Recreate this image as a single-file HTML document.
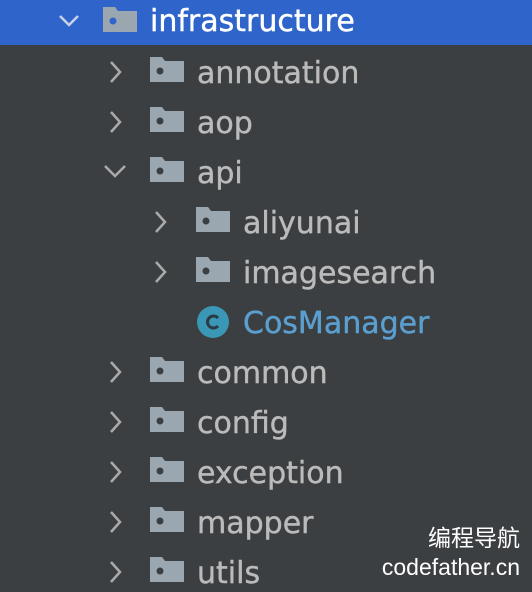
<html><head><style>
body{margin:0;width:532px;height:592px;background:#3c3f41;overflow:hidden;position:relative;font-family:"DejaVu Sans",sans-serif}
.r{position:absolute;left:0;width:532px;height:50px}
.t{position:absolute;top:6px;font-size:30px;color:#bbbbbb;line-height:34px;-webkit-text-stroke:0.4px currentColor}
svg{position:absolute}
.wm{position:absolute;right:12px;color:#fff;font-family:"Liberation Sans","Noto Sans CJK SC",sans-serif;font-size:23px;text-align:right;line-height:32px}
</style></head><body>
<div class="r" style="top:0;height:45px;background:#2f65ca"></div>
<svg width="0" height="0"><defs>
<g id="f"><path d="M0 2 h12 l3 4 h19 v21 h-34z" fill="#9aa7b0"/><circle cx="10" cy="16" r="3.5" fill="#3c3f41"/></g>
<g id="fs"><path d="M0 2 h12 l3 4 h19 v21 h-34z" fill="#9aa7b0"/><circle cx="10" cy="16" r="3.5" fill="#2f65ca"/></g>
</defs></svg>
<svg style="left:58px;top:10px" width="22" height="22"><path d="M2 6 L11 15 L20 6" stroke="#c8d2e8" stroke-width="2.5" fill="none"/></svg>
<svg style="left:103px;top:5px" width="36" height="30"><use href="#fs"/></svg>
<div class="t" style="left:150px;top:5px;color:#fff">infrastructure</div>

<svg style="left:105px;top:60px" width="22" height="24"><path d="M6 2 L15 12 L6 22" stroke="#aaa" stroke-width="2.5" fill="none"/></svg>
<svg style="left:150px;top:55px" width="36" height="30"><use href="#f"/></svg>
<div class="t" style="left:197px;top:57px">annotation</div>

<svg style="left:105px;top:110px" width="22" height="24"><path d="M6 2 L15 12 L6 22" stroke="#aaa" stroke-width="2.5" fill="none"/></svg>
<svg style="left:150px;top:105px" width="36" height="30"><use href="#f"/></svg>
<div class="t" style="left:197px;top:107px">aop</div>

<svg style="left:103px;top:160px" width="24" height="22"><path d="M2 6 L12 16 L22 6" stroke="#aaa" stroke-width="2.5" fill="none"/></svg>
<svg style="left:150px;top:155px" width="36" height="30"><use href="#f"/></svg>
<div class="t" style="left:197px;top:157px">api</div>

<svg style="left:150px;top:210px" width="22" height="24"><path d="M6 2 L15 12 L6 22" stroke="#aaa" stroke-width="2.5" fill="none"/></svg>
<svg style="left:196px;top:205px" width="36" height="30"><use href="#f"/></svg>
<div class="t" style="left:243px;top:207px">aliyunai</div>

<svg style="left:150px;top:260px" width="22" height="24"><path d="M6 2 L15 12 L6 22" stroke="#aaa" stroke-width="2.5" fill="none"/></svg>
<svg style="left:196px;top:255px" width="36" height="30"><use href="#f"/></svg>
<div class="t" style="left:243px;top:257px">imagesearch</div>

<svg style="left:196px;top:305px" width="36" height="36"><circle cx="17" cy="17" r="16" fill="#3a97b6"/><path d="M22 13 A6 6 0 1 0 22 21" stroke="#2b3a44" stroke-width="3" fill="none"/></svg>
<div class="t" style="left:243px;top:307px;color:#5a9fd0">CosManager</div>

<svg style="left:105px;top:360px" width="22" height="24"><path d="M6 2 L15 12 L6 22" stroke="#aaa" stroke-width="2.5" fill="none"/></svg>
<svg style="left:150px;top:355px" width="36" height="30"><use href="#f"/></svg>
<div class="t" style="left:197px;top:357px">common</div>

<svg style="left:105px;top:410px" width="22" height="24"><path d="M6 2 L15 12 L6 22" stroke="#aaa" stroke-width="2.5" fill="none"/></svg>
<svg style="left:150px;top:405px" width="36" height="30"><use href="#f"/></svg>
<div class="t" style="left:197px;top:407px">config</div>

<svg style="left:105px;top:460px" width="22" height="24"><path d="M6 2 L15 12 L6 22" stroke="#aaa" stroke-width="2.5" fill="none"/></svg>
<svg style="left:150px;top:455px" width="36" height="30"><use href="#f"/></svg>
<div class="t" style="left:197px;top:457px">exception</div>

<svg style="left:105px;top:510px" width="22" height="24"><path d="M6 2 L15 12 L6 22" stroke="#aaa" stroke-width="2.5" fill="none"/></svg>
<svg style="left:150px;top:505px" width="36" height="30"><use href="#f"/></svg>
<div class="t" style="left:197px;top:507px">mapper</div>

<svg style="left:105px;top:560px" width="22" height="24"><path d="M6 2 L15 12 L6 22" stroke="#aaa" stroke-width="2.5" fill="none"/></svg>
<svg style="left:150px;top:555px" width="36" height="30"><use href="#f"/></svg>
<div class="t" style="left:197px;top:557px">utils</div>

<div class="wm" style="top:522px">编程导航</div>
<div class="wm" style="top:551px">codefather.cn</div>
</body></html>
